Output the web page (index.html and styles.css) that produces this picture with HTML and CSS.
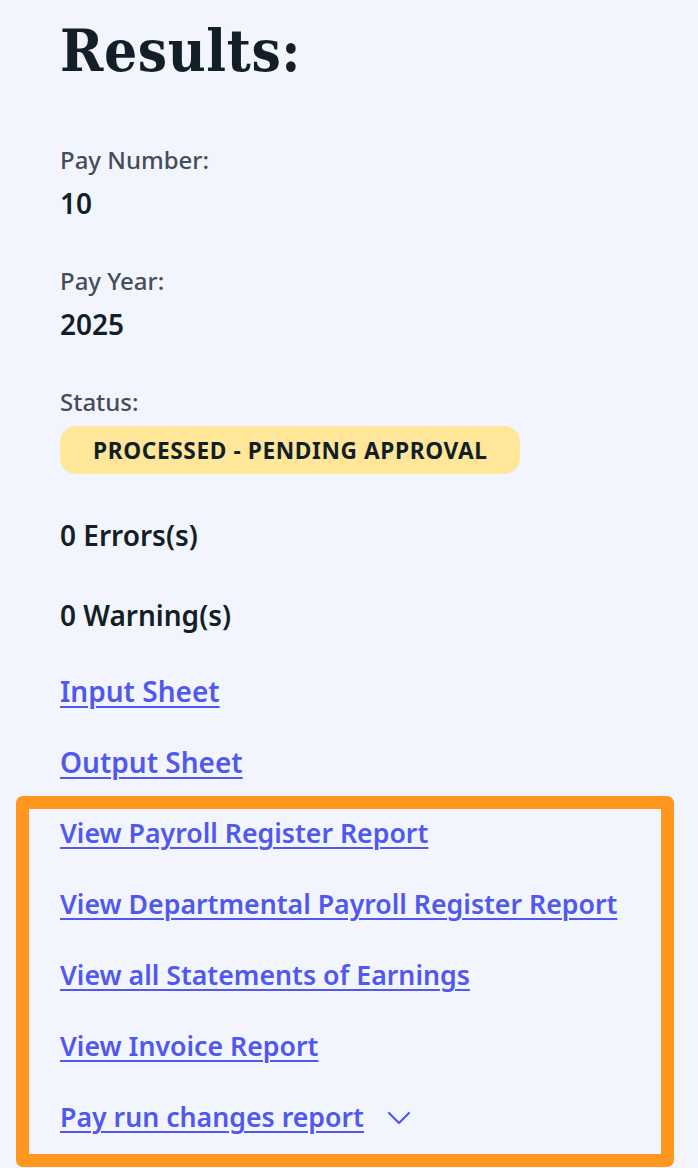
FILE: index.html
```html
<!DOCTYPE html>
<html lang="en">
<head>
<meta charset="utf-8">
<title>Results</title>
<link rel="stylesheet" href="styles.css">
</head>
<body>
<main class="results">
  <h1 class="title">Results:</h1>

  <div class="field field-first">
    <div class="field-label">Pay Number:</div>
    <div class="field-value">10</div>
  </div>

  <div class="field">
    <div class="field-label">Pay Year:</div>
    <div class="field-value">2025</div>
  </div>

  <div class="field">
    <div class="field-label">Status:</div>
    <span class="badge">PROCESSED - PENDING APPROVAL</span>
  </div>

  <p class="count count-errors">0 Errors(s)</p>
  <p class="count count-warnings">0 Warning(s)</p>

  <a class="link link-input" href="#">Input Sheet</a>
  <a class="link link-output" href="#">Output Sheet</a>

  <section class="highlight">
    <a class="link link-report" href="#">View Payroll Register Report</a>
    <a class="link link-report" href="#">View Departmental Payroll Register Report</a>
    <a class="link link-report" href="#">View all Statements of Earnings</a>
    <a class="link link-report" href="#">View Invoice Report</a>
    <div class="dropdown">
      <a class="link link-report" href="#">Pay run changes report</a>
      <svg class="chevron" width="24" height="16" viewBox="0 0 24 16" aria-hidden="true">
        <path d="M2 3 L12 13 L22 3" fill="none" stroke="#5058ee" stroke-width="2.2" stroke-linecap="round" stroke-linejoin="round"/>
      </svg>
    </div>
  </section>
</main>
</body>
</html>
```

FILE: styles.css
```css
* { box-sizing: border-box; }

html, body {
  margin: 0;
  padding: 0;
  background: #f2f5fd;
}

body {
  font-family: "Noto Sans", "Open Sans", sans-serif;
  color: #131f27;
}

.results {
  display: flex;
  flex-direction: column;
  align-items: flex-start;
  padding: 18px 0 0 60px;
}

.title {
  margin: 0;
  font-family: "DejaVu Serif Condensed", "DejaVu Serif", serif;
  font-weight: 700;
  font-size: 58px;
  line-height: 66px;
  letter-spacing: 0.6px;
  color: #131f27;
}

.field {
  display: flex;
  flex-direction: column;
  align-items: flex-start;
  margin-top: 44px;
}

.field-first { margin-top: 60px; }

.field-label {
  font-size: 24px;
  line-height: 32px;
  font-weight: 500;
  color: #454d58;
}

.field-value {
  margin-top: 9px;
  font-size: 28px;
  line-height: 36px;
  font-weight: 600;
  color: #131f27;
}

.badge {
  margin-top: 8px;
  height: 48px;
  display: inline-flex;
  align-items: center;
  padding: 0 32px 0 33px;
  border-radius: 16px;
  background: #ffe699;
  font-size: 22.7px;
  font-weight: 700;
  letter-spacing: 0.6px;
  color: #131f27;
}

.count {
  margin: 43px 0 0;
  font-size: 28px;
  line-height: 36px;
  font-weight: 600;
  color: #131f27;
}

.count-warnings { margin-top: 44px; }

.link {
  font-size: 28px;
  line-height: 36px;
  font-weight: 600;
  color: #5058ee;
  text-decoration: underline;
  text-decoration-thickness: 2px;
  text-underline-offset: 4px;
}

.link-report { font-size: 26.7px; }

.link-input { margin-top: 40px; }
.link-output { margin-top: 35px; }

.highlight {
  margin: 16px 0 0 -44px;
  width: 658px;
  height: 371px;
  border: 13px solid #ff961e;
  border-radius: 7px;
  padding: 6px 0 0 31px;
  display: flex;
  flex-direction: column;
  align-items: flex-start;
  gap: 35px;
}

.dropdown {
  display: flex;
  align-items: center;
  gap: 23px;
}

.chevron {
  display: block;
  margin-top: 2px;
}
```
